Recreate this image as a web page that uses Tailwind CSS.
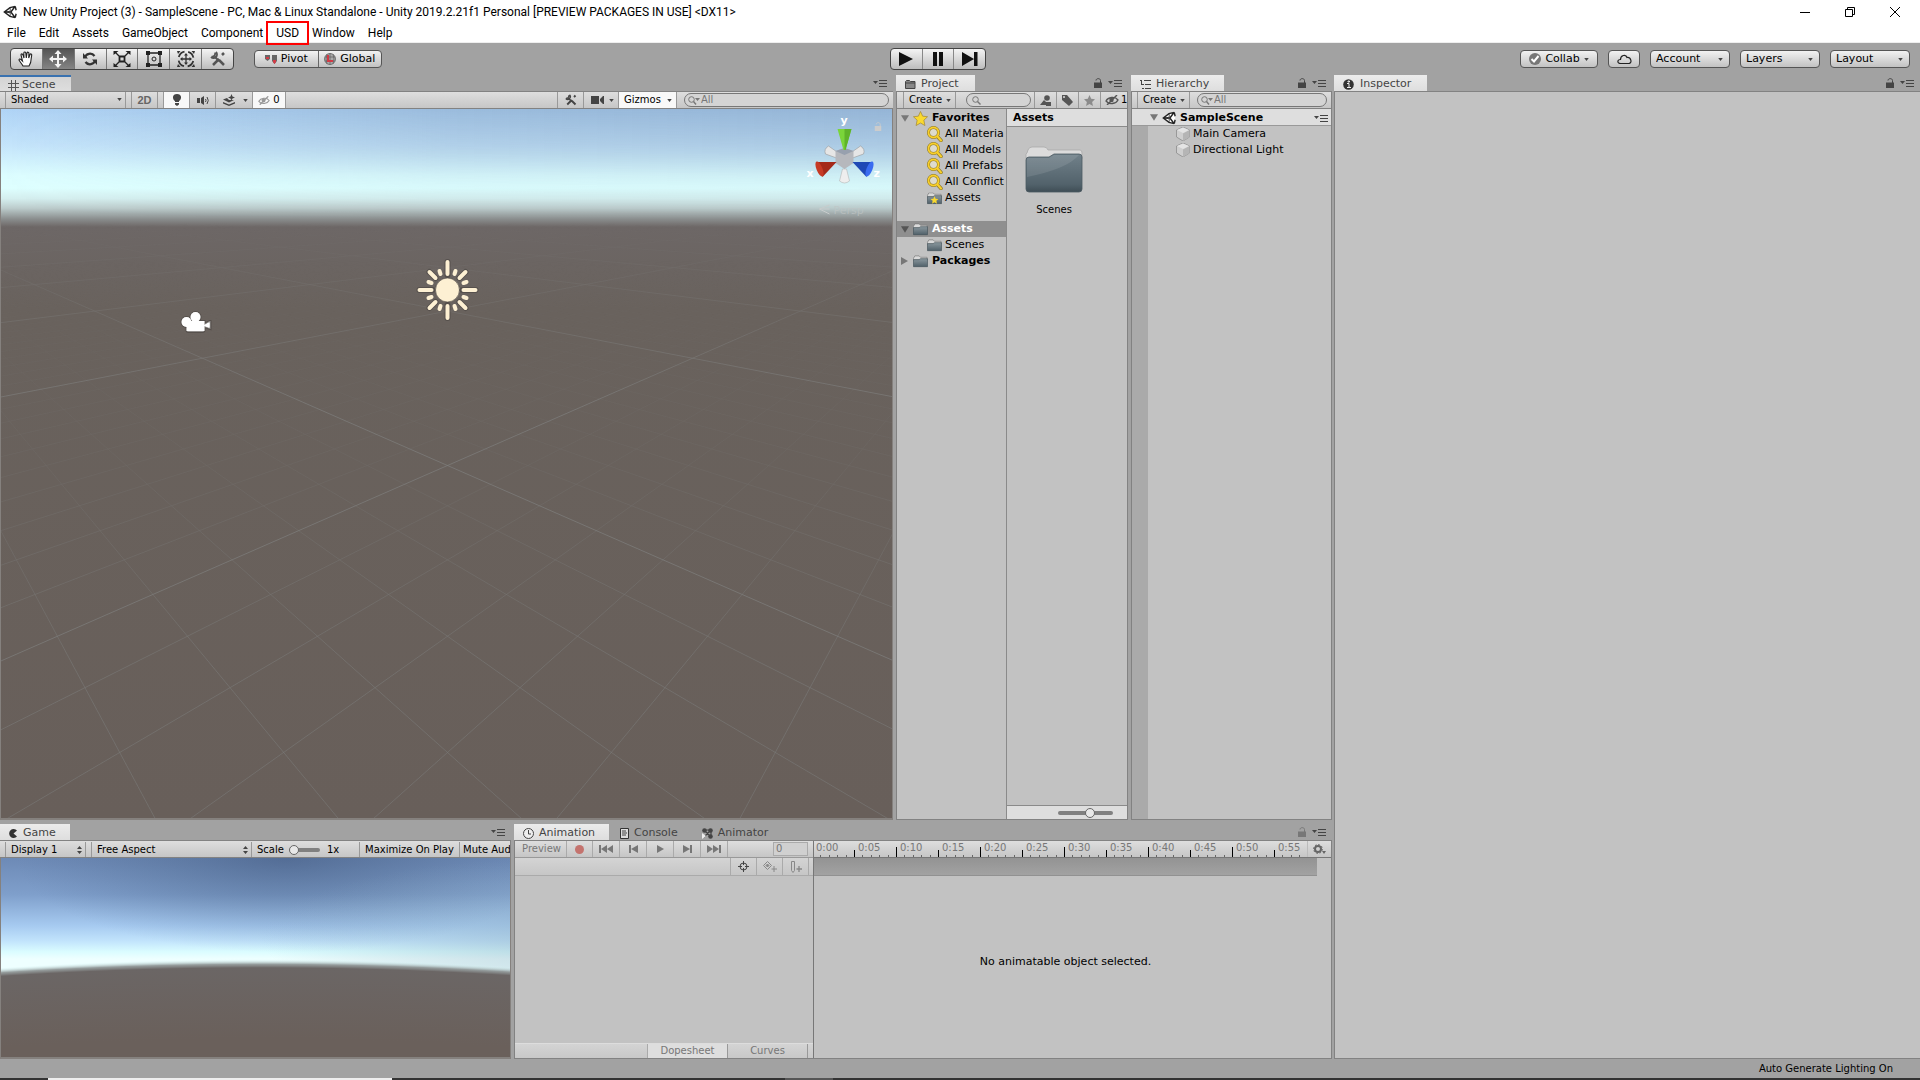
<!DOCTYPE html>
<html lang="en">
  <head>
    <meta charset="UTF-8" />
    <meta name="viewport" content="width=device-width, initial-scale=1.0" />
    <title>New Unity Project (3) - SampleScene</title>
    <script src="https://cdn.jsdelivr.net/npm/@tailwindcss/browser@4"></script>
  </head>
  <body class="flex min-h-screen flex-col overflow-hidden bg-[#a2a2a2] font-['DejaVu_Sans',sans-serif] text-[10px] leading-4 text-black">
    <!-- Shared icons -->
    <svg class="absolute size-0">
      <symbol id="unity" viewBox="0 0 16 16">
        <path d="M14.500 1 8 3 1.500 8 8 13l6.500 2L15 8z" fill="#fff" />
        <path d="M14 1.500 8 3 1.500 8 8 13l6 1.500M14 1.500l1 4.500M14 14.500l1-4.500M1.500 8H9M9 8l4.500-6M9 8l4.500 6" fill="none" stroke="#222" stroke-width="1.600" />
        <path d="m8 3 .5 3.500L5 8l3.500 1.500L8 13" fill="none" stroke="#222" stroke-width=".8" />
      </symbol>
      <symbol id="caret" viewBox="0 0 6 4"><path d="M0 0h6L3 4z" fill="#444" /></symbol>
      <symbol id="updown" viewBox="0 0 5 8"><path d="M0 3h5L2.500 0zM0 5h5L2.500 8z" fill="#444" /></symbol>
      <symbol id="panemenu" viewBox="0 0 14 8">
        <path d="M0 2h5L2.500 5z" fill="#444" />
        <path d="M6 1.500h8M6 4.500h8M6 7.500h8" stroke="#444" />
      </symbol>
      <symbol id="lock" viewBox="0 0 8 10">
        <path d="M0 4.500h8V10H0z" fill="currentColor" />
        <path d="M2 2.500C2 0 6.500 0 6.500 2.500V5" fill="none" stroke="currentColor" />
      </symbol>
      <symbol id="search" viewBox="0 0 12 9">
        <circle cx="3.500" cy="3.500" r="2.800" fill="none" stroke="#777" />
        <path d="m5.500 5.500 3 3" stroke="#777" stroke-width="1.400" />
      </symbol>
      <symbol id="searchdrop" viewBox="0 0 12 9">
        <circle cx="3.500" cy="3.500" r="2.800" fill="none" stroke="#777" />
        <path d="m5.500 5.500 2.500 3" stroke="#777" stroke-width="1.400" />
        <path d="M7 2h5L9.500 5z" fill="#777" />
      </symbol>
      <symbol id="tools" viewBox="0 0 16 16">
        <path d="m3 14 6-6M12 4l2-2M9 9l5 5" stroke="currentColor" stroke-width="2.500" />
        <path d="M4.500 5.500 9 10" stroke="currentColor" stroke-width="2" />
        <path d="M5 1.500a3 3 0 0 1-3.500 4M6 1a3.500 3.500 0 0 1-5 5" fill="none" stroke="currentColor" stroke-width="1.800" />
      </symbol>
      <symbol id="eyeoff" viewBox="0 0 14 10">
        <path d="M1 6c2-4 9-5 12-1-2 4-9 5-12 1z" fill="none" stroke="currentColor" stroke-width="1.300" />
        <circle cx="6.500" cy="5" r="2.200" fill="currentColor" />
        <path d="M2 10 12 0" stroke="currentColor" stroke-width="1.400" />
      </symbol>
      <symbol id="magnifier" viewBox="0 0 16 16">
        <path d="m10 10 4 4.500" stroke="#8a7420" stroke-width="3.400" stroke-linecap="round" />
        <circle cx="6.500" cy="6.500" r="5" fill="#dedbcc" stroke="#8a7420" stroke-width="3" />
        <circle cx="6.500" cy="6.500" r="5" fill="none" stroke="#f8cf2c" stroke-width="1.900" />
        <path d="m10.500 10.500 3.500 4" stroke="#f8cf2c" stroke-width="2.200" stroke-linecap="round" />
      </symbol>
      <linearGradient id="folderFill" x2="0" y2="1">
        <stop stop-color="#8b989e" /><stop offset="1" stop-color="#51616a" />
      </linearGradient>
      <symbol id="folder" viewBox="0 0 16 13">
        <path d="M.5 3 2 .5h4.500L8 2h7v3H.5z" fill="#dadada" stroke="#777" stroke-width=".7" />
        <path d="M.5 4.500h6l1.500-1h7.500v8.500H.5z" fill="url(#folderFill)" stroke="#45535a" stroke-width=".7" />
      </symbol>
      <symbol id="cube" viewBox="0 0 14 14">
        <path d="m7 0 6.500 3v7L7 14 .5 10V3z" fill="#cfcfcf" stroke="#8d8d8d" stroke-width=".8" />
        <path d="M7 6.500V14l6.500-4V3z" fill="#b5b5b5" />
        <path d="m7 .5 6 2.500-6 3-6-3z" fill="#e4e4e4" />
      </symbol>
      <symbol id="down" viewBox="0 0 10 8"><path d="M0 0h10L5 8z" fill="currentColor" /></symbol>
    </svg>

    <!-- Window title and menu -->
    <header class="bg-white font-[Roboto,sans-serif] text-xs">
      <div class="flex h-[23px] items-center">
        <svg class="ml-[3px] size-[14px]"><use href="#unity" /></svg>
        <h1 class="ml-[6px] whitespace-nowrap">New Unity Project (3) - SampleScene - PC, Mac &amp; Linux Standalone - Unity 2019.2.21f1 Personal [PREVIEW PACKAGES IN USE] &lt;DX11&gt;</h1>
        <div class="ml-auto flex gap-[35px] pr-5">
          <button aria-label="Minimize"><svg class="size-[10px]" viewBox="0 0 10 10"><path d="M0 5.500h10" stroke="#000" /></svg></button>
          <button aria-label="Restore"><svg class="size-[10px]" viewBox="0 0 10 10"><path d="M.5 2.500h7v7h-7zM2.500 2.500v-2h7v7h-2" fill="none" stroke="#000" /></svg></button>
          <button aria-label="Close"><svg class="size-[10px]" viewBox="0 0 10 10"><path d="m0 0 10 10M10 0 0 10" stroke="#000" /></svg></button>
        </div>
      </div>
      <nav class="flex h-5 items-center gap-[13px] border-b border-[#eee] pl-[7px]">
        <button>File</button>
        <button>Edit</button>
        <button>Assets</button>
        <button>GameObject</button>
        <button>Component</button>
        <button class="relative">USD<span class="absolute -inset-x-[10px] -inset-y-[4px] border-2 border-[#f00]"></span></button>
        <button>Window</button>
        <button>Help</button>
      </nav>
    </header>

    <!-- Main toolbar -->
    <div class="flex h-8 items-center px-[10px] text-[11px]">
      <div class="flex h-[22px] w-[224px] divide-x divide-[#777] overflow-hidden rounded border border-[#444] bg-linear-to-b from-[#f4f4f4] to-[#bdbdbd] text-[#333]">
        <button class="flex flex-1 items-center justify-center" aria-label="Hand">
          <svg class="size-4" viewBox="0 0 16 16"><path d="M5 15c-1-2-3-4-4-6 0-1 1-1.500 2-.5L4.500 10 3 4c0-1.500 1.500-1.500 2 0l1 3-.2-5c.2-1.300 1.700-1.300 2 0L8.300 7l.7-5c.4-1.300 1.900-1 1.900.3L10.700 7l1.300-3.500c.6-1.200 2-.6 1.700.7L13 9c0 3-1 4-2 6z" fill="#fff" stroke="#222" stroke-width="1.100" /></svg>
        </button>
        <button class="flex flex-1 items-center justify-center bg-linear-to-b from-[#555] to-[#858585]" aria-label="Move">
          <svg class="size-[18px]" viewBox="0 0 18 18"><path d="m9 0 3.500 4H10v4h4V5.500L18 9l-4 3.500V10h-4v4h2.500L9 18l-3.500-4H8v-4H4v2.500L0 9l4-3.500V8h4V4H5.500z" fill="#f4f4f4" /></svg>
        </button>
        <button class="flex flex-1 items-center justify-center" aria-label="Rotate">
          <svg class="size-4" viewBox="0 0 16 16"><path d="M3 7c.5-5 7-5.500 9.500-2M13 9c-.5 5-7 5.500-9.500 2" fill="none" stroke="#333" stroke-width="2.200" /><path d="M1 2v5.500h5zM15 14V8.500h-5z" fill="#333" /></svg>
        </button>
        <button class="flex flex-1 items-center justify-center" aria-label="Scale">
          <svg class="size-[18px]" viewBox="0 0 18 18"><path d="M6.500 6.500h5v5h-5z" fill="none" stroke="#222" stroke-width="1.800" /><path d="m2 2 4 4m6 6 4 4M16 2l-4 4m-6 6-4 4" stroke="#222" stroke-width="1.300" /><path d="M.5 1h5l-5 4zM17.500 1h-5l5 4zM.5 17h5l-5-4zM17.500 17h-5l5-4z" fill="#222" /></svg>
        </button>
        <button class="flex flex-1 items-center justify-center" aria-label="Rect">
          <svg class="size-4" viewBox="0 0 16 16"><path d="M2 2h12v12H2z" fill="none" stroke="#222" stroke-width="1.300" /><path d="M0 0h4v4H0zM12 0h4v4h-4zM0 12h4v4H0zM12 12h4v4h-4z" fill="#222" /><circle cx="8" cy="8" r="2" fill="none" stroke="#222" /></svg>
        </button>
        <button class="flex flex-1 items-center justify-center" aria-label="Transform">
          <svg class="size-[18px]" viewBox="0 0 18 18"><circle cx="9" cy="9" r="7.500" fill="none" stroke="#333" stroke-width="1.800" stroke-dasharray="8 3.780" stroke-dashoffset="-2" /><path d="M9 4v10M4 9h10" stroke="#333" stroke-width="1.300" /><path d="m9 3 2 2.500H7zM9 15l2-2.500H7zM3 9l2.500-2v4zM15 9l-2.500-2v4zM0 1h3.500L1 4zM18 1h-3.500L17 4zM0 17h3.500L1 14zM18 17h-3.500l2.500-3z" fill="#333" /></svg>
        </button>
        <button class="flex flex-1 items-center justify-center text-[#555]" aria-label="Custom tools"><svg class="size-4"><use href="#tools" /></svg></button>
      </div>
      <div class="ml-5 flex h-[18px] w-[128px] divide-x divide-[#666] rounded border border-[#555] bg-linear-to-b from-[#f2f2f2] to-[#c2c2c2]">
        <button class="flex flex-1 items-center justify-center gap-1">
          <svg class="h-[9px] w-3" viewBox="0 0 12 9"><path d="M0 0h5v4L2.500 6 0 4zM7 0h5v6L9.500 9 7 6z" fill="#666" /><path d="M1 2h3v2H1zM8 5h3v2l-1.500 2L8 7z" fill="#d33a45" /></svg>Pivot
        </button>
        <button class="flex flex-1 items-center justify-center gap-1">
          <svg class="size-3" viewBox="0 0 12 12"><circle cx="6" cy="6" r="5.500" fill="#aaa" stroke="#777" /><path d="M1 4h10M1 8h10M6 0v12M3 1q-2 5 0 10M9 1q2 5 0 10" fill="none" stroke="#666" stroke-width=".8" /><path d="M4 2v6h5" fill="none" stroke="#d33a45" stroke-width="2" /></svg>Global
        </button>
      </div>
      <div class="ml-[508px] flex h-[22px] w-24 divide-x divide-[#888] rounded border border-[#444] bg-linear-to-b from-[#f4f4f4] to-[#bdbdbd]">
        <button class="flex flex-1 items-center justify-center" aria-label="Play"><svg class="h-[14px] w-4" viewBox="0 0 16 14"><path d="m1 0 14 7-14 7z" fill="#111" /></svg></button>
        <button class="flex flex-1 items-center justify-center" aria-label="Pause"><svg class="h-[14px] w-[10px]" viewBox="0 0 10 14"><path d="M0 0h4v14H0zM6 0h4v14H6z" fill="#111" /></svg></button>
        <button class="flex flex-1 items-center justify-center" aria-label="Step"><svg class="h-[14px] w-4" viewBox="0 0 16 14"><path d="m0 0 12 7-12 7zM12 0h3.500v14H12z" fill="#111" /></svg></button>
      </div>
      <div class="ml-auto flex gap-[10px]">
        <button class="flex h-[18px] w-[78px] items-center justify-center gap-1 rounded border border-[#555] bg-linear-to-b from-[#f2f2f2] to-[#c2c2c2]">
          <svg class="size-3" viewBox="0 0 12 12"><circle cx="6" cy="6" r="6" fill="#777" /><path d="m2.500 6 2.500 2.500L9.500 3" fill="none" stroke="#fff" stroke-width="2" /></svg>
          Collab
          <svg class="h-[3px] w-[5px]"><use href="#caret" /></svg>
        </button>
        <button aria-label="Cloud" class="flex h-[18px] w-8 items-center justify-center rounded border border-[#555] bg-linear-to-b from-[#f2f2f2] to-[#c2c2c2]">
          <svg class="h-[10px] w-[15px]" viewBox="0 0 15 10"><path d="M3.500 9.500C0 9.500 0 5.500 3.500 5.500 3.500 1 9 0 10 3.500c4-.5 5.500 5.500 2 6z" fill="none" stroke="#222" stroke-width="1.200" /></svg>
        </button>
        <div class="relative">
          <select aria-label="Account" class="h-[18px] w-20 appearance-none rounded border border-[#555] bg-linear-to-b from-[#f2f2f2] to-[#c2c2c2] pl-[5px]"><option>Account</option></select>
          <svg class="absolute top-2 right-[7px] h-[3px] w-[5px]"><use href="#caret" /></svg>
        </div>
        <div class="relative">
          <select aria-label="Layers" class="h-[18px] w-20 appearance-none rounded border border-[#555] bg-linear-to-b from-[#f2f2f2] to-[#c2c2c2] pl-[5px]"><option>Layers</option></select>
          <svg class="absolute top-2 right-[7px] h-[3px] w-[5px]"><use href="#caret" /></svg>
        </div>
        <div class="relative">
          <select aria-label="Layout" class="h-[18px] w-20 appearance-none rounded border border-[#555] bg-linear-to-b from-[#f2f2f2] to-[#c2c2c2] pl-[5px]"><option>Layout</option></select>
          <svg class="absolute top-2 right-[7px] h-[3px] w-[5px]"><use href="#caret" /></svg>
        </div>
      </div>
    </div>

    <main class="grid flex-1 grid-cols-[1332fr_586fr] gap-[2px]">
      <div class="flex min-w-0 flex-col gap-1">
        <div class="grid flex-1 grid-cols-[893fr_232fr_201fr] gap-[3px]">
          <!-- Scene -->
          <section class="flex min-w-0 flex-col">
            <div class="flex h-4 items-center text-[11px] text-[#444]">
              <h2 class="flex h-4 w-[71px] items-center gap-[3px] border-t-2 border-[#3a72b0] bg-linear-to-b from-[#d4d4d4] to-[#dedede] pt-[2px] pl-2 font-normal">
                <svg class="size-[11px]" viewBox="0 0 11 11"><path d="M3.500 0v11M7.500 0v11M0 3.500h11M0 7.500h11" stroke="#555" /></svg>Scene
              </h2>
              <svg class="mr-[6px] ml-auto h-2 w-[14px]"><use href="#panemenu" /></svg>
            </div>
            <div class="flex h-[18px] items-stretch border-y border-[#828282] bg-linear-to-b from-[#dedede] to-[#c6c6c6] pl-[5px] text-[#444]">
              <div class="relative flex">
                <select aria-label="Draw mode" class="w-[121px] appearance-none border-x border-[#999] pl-[5px] text-black"><option>Shaded</option></select>
                <svg class="absolute top-[6px] right-1 h-[3px] w-[5px]"><use href="#caret" /></svg>
              </div>
              <button class="ml-[5px] w-[27px] border-x border-[#999] font-['Liberation_Sans',sans-serif] text-[11px] font-bold text-[#666]">2D</button>
              <button class="ml-[5px] flex w-[27px] items-center justify-center border-x border-[#999] bg-[#f8f8f8]" aria-label="Lighting"><svg class="h-3 w-2" viewBox="0 0 8 12"><path d="M4 0c5 0 5 5 2 7v1H2V7C-1 5-1 0 4 0zM2 9h4v1.500L4 12l-2-1.500z" fill="#444" /></svg></button>
              <button class="flex w-[26px] items-center justify-center border-r border-[#999]" aria-label="Audio"><svg class="h-[9px] w-3" viewBox="0 0 12 9"><path d="M0 2h3v5H0zM4 2l3-2v9L4 7z" fill="#444" /><path d="M8.500 3q1 1.500 0 3M10 1q2.500 3.500 0 7" fill="none" stroke="#444" /></svg></button>
              <button class="flex w-[37px] items-center justify-between border-r border-[#999] pr-1 pl-[7px]" aria-label="Effects">
                <svg class="size-3" viewBox="0 0 12 12"><path d="m0 5.500 4-1.500 2 2h5L6 8.500zM0 8l6 2.500L12 8v1.500L6 12 0 9.500z" fill="#444" /><path d="m8.500 0 1 2.500 2.500 1-2.500 1-1 2-1-2-2.500-1 2.500-1z" fill="#444" /></svg>
                <svg class="h-[3px] w-[5px]"><use href="#caret" /></svg>
              </button>
              <button class="flex w-[33px] items-center justify-center gap-[3px] border-r border-[#999] bg-[#f8f8f8] text-[#999]"><svg class="h-[9px] w-3"><use href="#eyeoff" /></svg><span class="text-black">0</span></button>
              <button class="ml-auto flex w-[27px] items-center justify-center border-x border-[#999]" aria-label="Component tools"><svg class="size-3"><use href="#tools" /></svg></button>
              <button class="flex w-[34px] items-center justify-between pr-1 pl-[7px]" aria-label="Camera">
                <svg class="h-2 w-[13px]" viewBox="0 0 13 8"><path d="M0 0h8v8H0zM9 3l3-3h1v8h-1L9 5z" fill="#444" /></svg>
                <svg class="h-[3px] w-[5px]"><use href="#caret" /></svg>
              </button>
              <button class="flex w-[59px] items-center justify-between border-x border-[#999] bg-[#f8f8f8] pr-1 pl-[5px] text-black">Gizmos<svg class="h-[3px] w-[5px]"><use href="#caret" /></svg></button>
              <div class="relative mr-1 ml-[7px] flex items-center">
                <input aria-label="Search scene" placeholder="All" class="h-[14px] w-[205px] rounded-full border border-[#777] bg-[#d4d4d4] pl-4 placeholder:text-[#777]" />
                <svg class="absolute top-1 left-1 h-[9px] w-3"><use href="#searchdrop" /></svg>
              </div>
            </div>
            <div class="relative flex-1 overflow-hidden border-x border-b-2 border-[#85817e] bg-[#69605b]">
              <svg id="sceneView" class="absolute inset-0 size-full" viewBox="0 0 892 709" preserveAspectRatio="xMidYMin slice">
                <defs>
                  <linearGradient id="sky" gradientUnits="userSpaceOnUse" x1="0" y1="0" x2="0" y2="118">
                    <stop stop-color="#b0d4f6" /><stop offset=".3" stop-color="#c4e4fb" /><stop offset=".56" stop-color="#dcfdff" />
                    <stop offset=".67" stop-color="#deffff" /><stop offset=".76" stop-color="#d4eeee" /><stop offset=".84" stop-color="#bccccc" /><stop offset=".93" stop-color="#8b8f8f" />
                    <stop offset="1" stop-color="#6d6766" />
                  </linearGradient>
                  <linearGradient id="skyShade" x2="1" y2="0"><stop stop-color="#7894b4" stop-opacity="0" /><stop offset=".5" stop-color="#7894b4" stop-opacity=".38" /><stop offset="1" stop-color="#7894b4" stop-opacity=".48" /></linearGradient>
                  <linearGradient id="fadeDown" x2="0" y2="1"><stop stop-color="#fff" /><stop offset=".4" stop-color="#fff" stop-opacity=".6" /><stop offset=".7" stop-color="#fff" stop-opacity=".15" /><stop offset="1" stop-color="#fff" stop-opacity="0" /></linearGradient>
                  <mask id="skyMask"><path d="M0 0h892v110H0z" fill="url(#fadeDown)" /></mask>
                  <linearGradient id="ground" x2="0" y2="1"><stop stop-color="#6d6766" /><stop offset=".14" stop-color="#69625d" /><stop offset="1" stop-color="#685f5a" /></linearGradient>
                  <linearGradient id="minorFade" gradientUnits="userSpaceOnUse" x1="0" y1="150" x2="0" y2="560"><stop stop-color="#fff" stop-opacity="0" /><stop offset=".5" stop-color="#fff" stop-opacity=".3" /><stop offset="1" stop-color="#fff" stop-opacity=".95" /></linearGradient>
                  <linearGradient id="majorFade" gradientUnits="userSpaceOnUse" x1="0" y1="114" x2="0" y2="300"><stop stop-color="#fff" stop-opacity="0" /><stop offset="1" stop-color="#fff" /></linearGradient>
                  <mask id="minorMask" maskUnits="userSpaceOnUse" x="0" y="0" width="892" height="709"><path d="M0 0h892v709H0z" fill="url(#minorFade)" /></mask>
                  <mask id="majorMask" maskUnits="userSpaceOnUse" x="0" y="0" width="892" height="709"><path d="M0 0h892v709H0z" fill="url(#majorFade)" /></mask>
                </defs>
                <path d="M0 0h892v118H0z" fill="url(#sky)" />
                <path d="M0 0h892v110H0z" fill="url(#skyShade)" mask="url(#skyMask)" />
                <path d="M0 118h892v591H0z" fill="url(#ground)" />
                <g mask="url(#minorMask)"><path id="minorGrid" stroke="#7b7b79" stroke-opacity=".6" fill="none" /></g>
                <g mask="url(#majorMask)"><path id="majorGrid" stroke="#7f7f7d" stroke-opacity=".7" fill="none" /></g>
                <!-- Directional light -->
                <g transform="translate(447 181)" stroke-linecap="round">
                  <g stroke="#4a4541" stroke-opacity=".6" stroke-width="6"><path d="M0-28v13M0 28V15M-28 0h13M28 0H15M-18-18l6 6M18-18l-6 6M-18 18l6-6M18 18l-6-6" /></g>
                  <g stroke="#fdf0d3" stroke-width="4"><path d="M0-28v12M0 28V16M-28 0h12M28 0H16M-18-18l6 6M18-18l-6 6M-18 18l6-6M18 18l-6-6" /><path d="m-8-19 1 3M8-19l-1 3M-8 19l1-3M8 19l-1-3M-19-8l3 1M19-8l-3 1M-19 8l3-1M19 8l-3-1" /></g>
                  <circle r="12" fill="#fdf0d3" stroke="#4a4541" stroke-opacity=".6" />
                </g>
                <!-- Camera -->
                <g stroke="#4a4541" stroke-opacity=".6" stroke-width="2" fill="#fff">
                  <path d="M186 212h18v3l5-3h1v8l-6-2v3q0 2-2 2h-14q-2 0-2-2z" /><circle cx="186" cy="213" r="5" /><circle cx="195" cy="208" r="5" />
                </g>
                <path d="M186 212h18v4l5-3v6l-5-2v5h-18z" fill="#fff" /><circle cx="186" cy="213" r="5" fill="#fff" /><circle cx="195" cy="208" r="5" fill="#fff" />
                <!-- Axis gizmo -->
                <g font-family="DejaVu Sans" font-size="11" font-weight="bold" fill="#fff">
                  <text x="840" y="15">y</text><text x="806" y="68">x</text><text x="873" y="68">z</text>
                </g>
                <path d="m836 49-11-4q-2-5 3-8l10 7zM852 49l11-4q2-5-3-8l-10 7z" fill="#e6e6e6" stroke="#999" stroke-width=".6" />
                <path d="m835 42 9-3 9 3v12l-9 6-9-6z" fill="#b6b8bd" /><path d="m835 42 9-3 9 3-9 4z" fill="#97a0ae" />
                <path d="M837 20h14l-6 21h-2z" fill="#7ad53a" /><path d="M844 20h7l-6 21h-1z" fill="#5fb32a" />
                <path d="M836 53h-20l6 15z" fill="#a42a1a" /><ellipse cx="819" cy="60" rx="3" ry="8" transform="rotate(-22 819 60)" fill="#c63a25" />
                <path d="M852 53h20l-6 15z" fill="#1f48b5" /><ellipse cx="869" cy="60" rx="3" ry="8" transform="rotate(22 869 60)" fill="#3a6cf0" />
                <path d="m842 60-3 12q5 4 10 0l-3-12z" fill="#eee" stroke="#aaa" stroke-width=".5" />
                <use href="#lock" x="874" y="13" width="7" height="9" color="#ccc" />
                <path d="m829 96-10 4 10 5M819 100h10" fill="none" stroke="#c8cccc" />
                <text x="833" y="105" font-family="DejaVu Sans" font-size="11" fill="#bfc5c5" fill-opacity=".7">Persp</text>
              </svg>
            </div>
          </section>

          <!-- Project -->
          <section class="flex min-w-0 flex-col">
            <div class="flex h-4 items-center text-[11px] text-[#444]">
              <h2 class="flex h-4 w-[79px] items-center gap-[5px] bg-linear-to-b from-[#ececec] to-[#dedede] pt-[2px] pl-[9px] font-normal">
                <svg class="h-[9px] w-[11px]" viewBox="0 0 11 9"><path d="M.5 8.500v-7L1.500.5h3l1 1H10v7z" fill="#888" stroke="#444" /><path d="M1 3h9" stroke="#444" /></svg>Project
              </h2>
              <svg class="ml-auto h-[10px] w-2"><use href="#lock" /></svg>
              <svg class="mr-[6px] ml-[6px] h-2 w-[14px]"><use href="#panemenu" /></svg>
            </div>
            <div class="flex h-[18px] items-stretch overflow-hidden border border-[#828282] bg-linear-to-b from-[#dedede] to-[#c6c6c6] pl-[6px] text-[#555]">
              <button class="flex w-[53px] items-center justify-between border-x border-[#999] pr-1 pl-[5px] text-black">Create<svg class="h-[3px] w-[5px]"><use href="#caret" /></svg></button>
              <div class="relative mr-[3px] ml-auto flex items-center">
                <input aria-label="Search project" class="h-[14px] w-[65px] rounded-full border border-[#777] bg-[#d4d4d4] pl-4" />
                <svg class="absolute top-1 left-[6px] h-[9px] w-3"><use href="#search" /></svg>
              </div>
              <button class="flex w-[22px] items-center justify-center border-l border-[#999]" aria-label="Filter by type"><svg class="size-[11px]" viewBox="0 0 11 11"><path d="M0 10h6V7L4 5zM6 7h5v4H6z" fill="#555" /><circle cx="7" cy="3" r="2.800" fill="#555" /></svg></button>
              <button class="flex w-[22px] items-center justify-center border-l border-[#999]" aria-label="Filter by label"><svg class="size-[11px]" viewBox="0 0 11 11"><path d="M0 0h5l6 7-4 4-7-6z" fill="#555" /><circle cx="2" cy="2" r="1" fill="#ddd" /></svg></button>
              <button class="flex w-[22px] items-center justify-center border-l border-[#999]" aria-label="Save search"><svg class="size-[11px]" viewBox="0 0 16 16"><path d="m8 0 2.400 5.500 5.600.5-4.200 4 1.200 6L8 13l-5 3 1.200-6L0 6l5.600-.5z" fill="#8b8b8b" /></svg></button>
              <button class="flex w-[27px] shrink-0 items-center gap-[2px] border-l border-[#999] pl-1"><svg class="h-[10px] w-[14px] shrink-0"><use href="#eyeoff" /></svg><span class="text-black">1</span></button>
            </div>
            <div class="grid flex-1 grid-cols-[110fr_120fr] border-x border-b border-[#828282] bg-[#c2c2c2]">
              <ul class="min-w-0 overflow-hidden border-r border-[#8a8a8a] pt-px text-[11px] whitespace-nowrap">
                <li class="flex h-4 items-center pl-1 font-bold"><svg class="h-[7px] w-2 text-[#777]"><use href="#down" /></svg><svg class="mx-1 size-[15px]" viewBox="0 0 16 16"><path d="m8 .5 2.300 5 5.200.6-3.900 3.700 1.100 5.700L8 12.800 3.300 15.500l1.100-5.700L.5 6.100l5.200-.6z" fill="#fad92e" stroke="#a58b3a" stroke-width=".8" /></svg>Favorites</li>
                <li class="flex h-4 items-center gap-[2px] pl-[30px]"><svg class="size-4 shrink-0"><use href="#magnifier" /></svg>All Materia</li>
                <li class="flex h-4 items-center gap-[2px] pl-[30px]"><svg class="size-4 shrink-0"><use href="#magnifier" /></svg>All Models</li>
                <li class="flex h-4 items-center gap-[2px] pl-[30px]"><svg class="size-4 shrink-0"><use href="#magnifier" /></svg>All Prefabs</li>
                <li class="flex h-4 items-center gap-[2px] pl-[30px]"><svg class="size-4 shrink-0"><use href="#magnifier" /></svg>All Conflict</li>
                <li class="flex h-4 items-center gap-[3px] pl-[30px]"><svg class="h-[13px] w-[15px]" viewBox="0 0 16 13"><use href="#folder" /><path d="m8 4 1.200 2.700 3 .3-2.200 2 .6 3L8 10.500 5.400 12 6 9 3.800 7l3-.3z" fill="#fad92e" /></svg>Assets</li>
                <li class="mt-[15px] flex h-4 items-center bg-[#8f8f8f] pl-1 font-bold text-white"><svg class="h-[7px] w-2 text-[#555]"><use href="#down" /></svg><svg class="mx-1 h-[13px] w-[15px]"><use href="#folder" /></svg>Assets</li>
                <li class="flex h-4 items-center gap-[3px] pl-[30px]"><svg class="h-[13px] w-[15px]"><use href="#folder" /></svg>Scenes</li>
                <li class="flex h-4 items-center pl-1 font-bold"><svg class="size-2" viewBox="0 0 8 8"><path d="M0 0v8l7-4z" fill="#777" /></svg><svg class="mx-1 h-[13px] w-[15px]"><use href="#folder" /></svg>Packages</li>
              </ul>
              <div class="flex flex-col">
                <h3 class="h-[18px] border-b border-[#8a8a8a] bg-[#dedede] pl-[6px] text-[11px] leading-[18px] font-bold">Assets</h3>
                <figure class="mt-[18px] ml-4 flex w-[62px] flex-col items-center">
                  <svg class="h-[50px] w-[58px]" viewBox="0 0 58 50">
                    <defs><linearGradient id="bigFolder" x2="0" y2="1"><stop stop-color="#71818a" /><stop offset=".8" stop-color="#52626b" /><stop offset="1" stop-color="#3f4d55" /></linearGradient></defs>
                    <path d="M1 14V9q1 0 2-4 1-3 4-3h12q3 0 4 3h32q2 0 2 3v6z" fill="#dcdcdc" stroke="#aaa" stroke-width=".8" />
                    <path d="M1 15q0-3 3-3h20l5-3h25q3 0 3 3v32q0 3-3 3H4q-3 0-3-3z" fill="url(#bigFolder)" stroke="#4c5a62" stroke-width=".8" />
                    <path d="M2 32V14q0-1 2-1h20l5-3h25q-12 14-52 22z" fill="#fff" fill-opacity=".1" />
                  </svg>
                  <figcaption class="mt-[7px]">Scenes</figcaption>
                </figure>
                <div class="mt-auto flex h-[14px] items-center justify-end border-t border-[#8a8a8a] bg-[#dedede] pr-[14px]">
                  <input type="range" min="0" max="100" value="60" aria-label="Icon size" class="h-1 w-[55px] appearance-none rounded-full bg-[#808080] [&::-webkit-slider-thumb]:size-[10px] [&::-webkit-slider-thumb]:appearance-none [&::-webkit-slider-thumb]:rounded-full [&::-webkit-slider-thumb]:border [&::-webkit-slider-thumb]:border-[#666] [&::-webkit-slider-thumb]:bg-[#e8e8e8]" />
                </div>
              </div>
            </div>
          </section>

          <!-- Hierarchy -->
          <section class="flex min-w-0 flex-col">
            <div class="flex h-4 items-center text-[11px] text-[#444]">
              <h2 class="flex h-4 w-[93px] items-center gap-[5px] bg-linear-to-b from-[#ececec] to-[#dedede] pt-[2px] pl-[9px] font-normal">
                <svg class="h-[9px] w-[11px]" viewBox="0 0 11 9"><path d="M0 .5h2M4 .5h7M2 4.500h2M5 4.500h6M2 8.500h2M5 8.500h6M1.500 0v5" stroke="#444" /></svg>Hierarchy
              </h2>
              <svg class="ml-auto h-[10px] w-2"><use href="#lock" /></svg>
              <svg class="mr-[6px] ml-[6px] h-2 w-[14px]"><use href="#panemenu" /></svg>
            </div>
            <div class="flex h-[18px] items-stretch border border-[#828282] bg-linear-to-b from-[#dedede] to-[#c6c6c6] pl-[5px]">
              <button class="flex w-[53px] items-center justify-between border-x border-[#999] pr-1 pl-[5px]">Create<svg class="h-[3px] w-[5px]"><use href="#caret" /></svg></button>
              <div class="relative mr-1 ml-[7px] flex flex-1 items-center">
                <input aria-label="Search hierarchy" placeholder="All" class="h-[14px] w-full rounded-full border border-[#777] bg-[#d4d4d4] pl-4 placeholder:text-[#777]" />
                <svg class="absolute top-1 left-1 h-[9px] w-3"><use href="#searchdrop" /></svg>
              </div>
            </div>
            <div class="flex flex-1 flex-col border-x border-b border-[#828282] bg-[#c2c2c2] text-[11px]">
              <div class="flex h-[17px] items-center border-b border-[#999] bg-[#dedede] pt-px pr-[3px] pl-[18px] font-bold">
                <svg class="h-[7px] w-2 text-[#777]"><use href="#down" /></svg>
                <svg class="mx-1 size-[14px]"><use href="#unity" /></svg>SampleScene
                <svg class="ml-auto h-2 w-[14px]"><use href="#panemenu" /></svg>
              </div>
              <div class="flex flex-1">
                <div class="w-4 bg-[#aaa]"></div>
                <ul class="pl-7">
                  <li class="flex h-4 items-center gap-[3px]"><svg class="size-[14px]"><use href="#cube" /></svg>Main Camera</li>
                  <li class="flex h-4 items-center gap-[3px]"><svg class="size-[14px]"><use href="#cube" /></svg>Directional Light</li>
                </ul>
              </div>
            </div>
          </section>
        </div>

        <div class="grid h-[235px] grid-cols-[511fr_818fr] gap-[3px]">
          <!-- Game -->
          <section class="flex min-w-0 flex-col">
            <div class="flex h-4 items-center text-[11px] text-[#444]">
              <h2 class="flex h-4 w-[70px] items-center gap-[5px] bg-linear-to-b from-[#ececec] to-[#dedede] pt-[2px] pl-[9px] font-normal">
                <svg class="size-[9px]" viewBox="0 0 9 9"><path d="M8 1.500A4.500 4.500 0 1 0 8 7.500L4.500 4.500z" fill="#333" /></svg>Game
              </h2>
              <svg class="mr-[6px] ml-auto h-2 w-[14px]"><use href="#panemenu" /></svg>
            </div>
            <div class="flex h-[18px] items-stretch overflow-hidden border-y border-r border-[#828282] bg-linear-to-b from-[#dedede] to-[#c6c6c6] pt-px pl-[5px] whitespace-nowrap">
              <div class="relative flex">
                <select aria-label="Display" class="w-[81px] appearance-none border-x border-[#999] pl-[5px]"><option>Display 1</option></select>
                <svg class="absolute top-1 right-1 h-2 w-[5px]"><use href="#updown" /></svg>
              </div>
              <div class="relative ml-[5px] flex">
                <select aria-label="Aspect" class="w-[161px] appearance-none border-x border-[#999] pl-[5px]"><option>Free Aspect</option></select>
                <svg class="absolute top-1 right-1 h-2 w-[5px]"><use href="#updown" /></svg>
              </div>
              <label class="flex w-[108px] shrink-0 items-center gap-[5px] border-r border-[#999] pl-[5px]">Scale
                <input type="range" min="1" max="5" value="1" class="h-1 w-[31px] appearance-none rounded-full bg-[#808080] [&::-webkit-slider-thumb]:size-[10px] [&::-webkit-slider-thumb]:appearance-none [&::-webkit-slider-thumb]:rounded-full [&::-webkit-slider-thumb]:border [&::-webkit-slider-thumb]:border-[#666] [&::-webkit-slider-thumb]:bg-[#e8e8e8]" />
                <span class="ml-[2px]">1x</span>
              </label>
              <button class="w-[100px] shrink-0 border-r border-[#999]">Maximize On Play</button>
              <button class="shrink-0 pl-[3px]">Mute Aud</button>
            </div>
            <div class="relative flex-1 border-x border-b-2 border-[#85817e]">
              <svg class="absolute inset-0 size-full" viewBox="0 0 509 199" preserveAspectRatio="none">
                <defs>
                  <linearGradient id="gameSky" gradientUnits="userSpaceOnUse" x1="0" y1="0" x2="0" y2="104">
                    <stop stop-color="#6d8ab6" /><stop offset=".35" stop-color="#7f9fcb" /><stop offset=".65" stop-color="#a6caf0" />
                    <stop offset=".8" stop-color="#c2e4fc" /><stop offset=".9" stop-color="#dafcff" /><stop offset=".97" stop-color="#eeffff" />
                  </linearGradient>
                  <radialGradient id="gameShade" gradientUnits="userSpaceOnUse" cx="0" cy="0" r="1" gradientTransform="translate(285 0) scale(270 95)">
                    <stop stop-color="#2f4468" stop-opacity=".42" /><stop offset=".5" stop-color="#3a5174" stop-opacity=".22" /><stop offset="1" stop-color="#41597f" stop-opacity="0" />
                  </radialGradient>
                  <radialGradient id="gameSide" gradientUnits="userSpaceOnUse" cx="0" cy="0" r="1" gradientTransform="translate(560 80) scale(300 80)">
                    <stop stop-color="#8fafc2" stop-opacity=".5" /><stop offset="1" stop-color="#8fafc2" stop-opacity="0" />
                  </radialGradient>
                  <radialGradient id="gameGround" gradientUnits="userSpaceOnUse" cx="260" cy="4109" r="4008">
                    <stop offset=".98" stop-color="#6a605b" /><stop offset=".9978" stop-color="#6b6665" /><stop offset=".9987" stop-color="#8c9292" stop-opacity=".9" /><stop offset="1" stop-color="#dff" stop-opacity="0" />
                  </radialGradient>
                </defs>
                <path d="M0 0h509v199H0z" fill="url(#gameSky)" />
                <path d="M0 0h509v100H0z" fill="url(#gameShade)" />
                <path d="M0 0h509v199H0z" fill="url(#gameSide)" />
                <path d="M0 0h509v199H0z" fill="url(#gameGround)" />
              </svg>
            </div>
          </section>

          <!-- Animation -->
          <section class="flex min-w-0 flex-col">
            <div class="flex h-4 items-center text-[11px] text-[#444]">
              <h2 class="flex h-4 w-[95px] items-center gap-[5px] bg-linear-to-b from-[#ececec] to-[#dedede] pt-[2px] pl-[9px] font-normal">
                <svg class="size-[11px]" viewBox="0 0 11 11"><circle cx="5.500" cy="5.500" r="5" fill="#eee" stroke="#444" /><path d="M5.500 2v4H8" fill="none" stroke="#444" /></svg>Animation
              </h2>
              <button class="ml-[11px] flex items-center gap-[5px] pt-[2px]"><svg class="h-[11px] w-[9px]" viewBox="0 0 9 11"><path d="M.5.5h8v10h-8z" fill="#ddd" stroke="#333" /><path d="M2 3h4M2 5h5M2 7h4" stroke="#444" /></svg>Console</button>
              <button class="ml-6 flex items-center gap-[5px] pt-[2px]"><svg class="size-[11px]" viewBox="0 0 11 11"><path d="m2 2 7 7M9 2 2 9M2 2h7M9 2v7" stroke="#444" stroke-width="1.200" /><circle cx="2.500" cy="2.500" r="2.300" fill="#444" /><circle cx="8.500" cy="2.500" r="2.300" fill="#444" /><circle cx="8.500" cy="8.500" r="2.300" fill="#444" /><path d="m0 5 4 3-4 3z" fill="#eee" /></svg>Animator</button>
              <svg class="ml-auto h-[10px] w-2 text-[#777]"><use href="#lock" /></svg>
              <svg class="mr-[6px] ml-[6px] h-2 w-[14px]"><use href="#panemenu" /></svg>
            </div>
            <div class="grid flex-1 grid-cols-[299fr_517fr] border border-[#828282] bg-[#c2c2c2]">
              <div class="flex min-w-0 flex-col border-r border-[#777] text-[#777]">
                <div class="flex h-[17px] items-stretch border-b border-[#999] bg-linear-to-b from-[#dedede] to-[#c6c6c6] pl-[2px]">
                  <button class="w-[50px] border-r border-[#aaa]">Preview</button>
                  <button class="flex w-[26px] items-center justify-center border-r border-[#aaa]" aria-label="Record"><svg class="size-[9px]" viewBox="0 0 9 9"><circle cx="4.500" cy="4.500" r="4.500" fill="#c4736e" /></svg></button>
                  <button class="flex w-[27px] items-center justify-center border-r border-[#aaa]" aria-label="First frame"><svg class="h-2 w-[14px]" viewBox="0 0 14 8"><path d="M0 0h2v8H0zM2 4l6-4v8zM8 4l6-4v8z" fill="#777" /></svg></button>
                  <button class="flex w-[27px] items-center justify-center border-r border-[#aaa]" aria-label="Previous key"><svg class="h-2 w-[9px]" viewBox="0 0 9 8"><path d="M0 0h2v8H0zM2 4l7-4v8z" fill="#777" /></svg></button>
                  <button class="flex w-[27px] items-center justify-center border-r border-[#aaa]" aria-label="Play clip"><svg class="h-2 w-[7px]" viewBox="0 0 7 8"><path d="m0 0 7 4-7 4z" fill="#777" /></svg></button>
                  <button class="flex w-[27px] items-center justify-center border-r border-[#aaa]" aria-label="Next key"><svg class="h-2 w-[9px]" viewBox="0 0 9 8"><path d="m0 0 7 4-7 4zM7 0h2v8H7z" fill="#777" /></svg></button>
                  <button class="flex w-[27px] items-center justify-center border-r border-[#aaa]" aria-label="Last frame"><svg class="h-2 w-[14px]" viewBox="0 0 14 8"><path d="m0 0 6 4-6 4zM6 0l6 4-6 4zM12 0h2v8h-2z" fill="#777" /></svg></button>
                  <input aria-label="Frame" value="0" class="mt-px mr-[5px] ml-auto h-[14px] w-[35px] border border-[#aaa] bg-[#d0d0d0] pl-[2px]" />
                </div>
                <div class="flex h-[18px] items-stretch justify-end border-b border-[#aaa] bg-linear-to-b from-[#d4d4d4] to-[#c6c6c6] pr-1">
                  <button class="flex w-[26px] items-center justify-center border-l border-[#aaa]" aria-label="Filter by selection"><svg class="size-[11px]" viewBox="0 0 11 11"><circle cx="5.500" cy="5.500" r="3.500" fill="none" stroke="#444" /><path d="M5.500 0v4M5.500 7v4M0 5.500h4M7 5.500h4" stroke="#444" /></svg></button>
                  <button class="flex w-[26px] items-center justify-center border-l border-[#aaa]" aria-label="Add keyframe"><svg class="h-[11px] w-[14px]" viewBox="0 0 14 11"><path d="m4.500.5 4 4-4 4-4-4z" fill="none" stroke="#888" /><path d="m4.500 3 1.500 1.500L4.500 6 3 4.500zM11 5v6M8.500 8h5.500" stroke="#888" fill="#888" /></svg></button>
                  <button class="flex w-[27px] items-center justify-center border-x border-[#aaa]" aria-label="Add event"><svg class="h-3 w-3" viewBox="0 0 12 12"><path d="M1.500.5h3v9L3 11.500l-1.500-2z" fill="none" stroke="#888" /><path d="M9 5v6M6.500 8H12" stroke="#888" stroke-width="1.300" /></svg></button>
                </div>
                <div class="mt-auto flex h-[15px] justify-end border-t border-[#ddd] bg-linear-to-b from-[#d4d4d4] to-[#c8c8c8] pr-[5px]">
                  <button class="w-20 border-l border-[#aaa] bg-[#dedede] leading-[14px]">Dopesheet</button>
                  <button class="w-[81px] border-x border-[#999] leading-[14px]">Curves</button>
                </div>
              </div>
              <div class="flex min-w-0 flex-col">
                <div class="flex h-[17px] border-b border-[#777] bg-linear-to-b from-[#dedede] to-[#c6c6c6] text-[#777]">
                  <div class="relative min-w-0 flex-1 overflow-hidden">
                    <svg id="ticks" class="absolute inset-0 h-4 w-[494px]"></svg>
                    <div id="times" class="flex leading-[13px]"></div>
                  </div>
                  <button class="flex w-6 shrink-0 items-center border-l border-[#bbb] pl-[5px]" aria-label="Timeline options"><svg class="h-[11px] w-[13px]" viewBox="0 0 13 11"><circle cx="5" cy="5" r="3" fill="none" stroke="#666" stroke-width="2" /><circle cx="5" cy="5" r="4.400" fill="none" stroke="#666" stroke-dasharray="1.700 1.700" /><path d="M9 7h4l-2 3z" fill="#666" /></svg></button>
                </div>
                <div class="mr-[14px] h-[18px] border-b border-[#919191] bg-linear-to-b from-[#939393] to-[#a2a2a2]"></div>
                <p class="my-auto pr-[14px] pb-[10px] text-center text-[11px]">No animatable object selected.</p>
              </div>
            </div>
          </section>
        </div>
      </div>

      <!-- Inspector -->
      <section class="flex min-w-0 flex-col">
        <div class="flex h-4 items-center text-[11px] text-[#444]">
          <h2 class="flex h-4 w-[93px] items-center gap-[6px] bg-linear-to-b from-[#ececec] to-[#dedede] pt-[2px] pl-[9px] font-normal">
            <svg class="size-[11px]" viewBox="0 0 11 11"><circle cx="5.500" cy="5.500" r="5.300" fill="#333" /><path d="M4 4.500h2V8M4 8.500h4M5 2h1.500v1H5z" fill="none" stroke="#eee" /></svg>Inspector
          </h2>
          <svg class="ml-auto h-[10px] w-2"><use href="#lock" /></svg>
          <svg class="mr-[6px] ml-[6px] h-2 w-[14px]"><use href="#panemenu" /></svg>
        </div>
        <div class="flex-1 border border-r-0 border-[#828282] bg-[#c2c2c2]"></div>
      </section>
    </main>

    <footer>
      <p class="h-[19px] pr-[27px] text-right leading-[19px]">Auto Generate Lighting On</p>
      <div class="flex h-[2px] bg-[#333]"><div class="ml-12 w-[344px] bg-[#eee]"></div><div class="ml-[393px] w-12 bg-[#555]"></div></div>
    </footer>

    <script>
      // Ground grid, seen in perspective from a corner
      const point = (i, j) => {
        const z = 0.00363 + 0.0002315 * (i + j);
        return `${(447 + (0.1457 * (i - j)) / z).toFixed(1)} ${(81 + 1 / z).toFixed(1)}`;
      };
      const near = (0.0008 - 0.00363) / 0.0002315;
      const far = (0.035 - 0.00363) / 0.0002315;
      let minor = "";
      let major = "";
      for (let c = -90; c <= 90; c++) {
        const d =
          `M${point(c, near - c)}L${point(c, far - c)}` +
          `M${point(near - c, c)}L${point(far - c, c)}`;
        if (c % 10 === 0) major += d;
        else if (Math.abs(c) < 40) minor += d;
      }
      document.getElementById("minorGrid").setAttribute("d", minor);
      document.getElementById("majorGrid").setAttribute("d", major);

      // Timeline ruler
      let labels = "";
      let marks = "";
      for (let k = 0; k < 12; k++) {
        labels += `<span class="w-[42px] shrink-0 pl-[2px]">0:${String(k * 5).padStart(2, "0")}</span>`;
        if (k > 0) marks += `<path d="M${k * 42 - 1.5} ${k % 2 ? 9 : 6}V16" stroke="#000" />`;
        for (let n = 1; n < 5; n++) {
          marks += `<path d="M${Math.round(k * 42 + n * 8.4) - 1.5} 14V16" stroke="#666" />`;
        }
      }
      document.getElementById("times").innerHTML = labels;
      document.getElementById("ticks").innerHTML = marks;
    </script>
  </body>
</html>
